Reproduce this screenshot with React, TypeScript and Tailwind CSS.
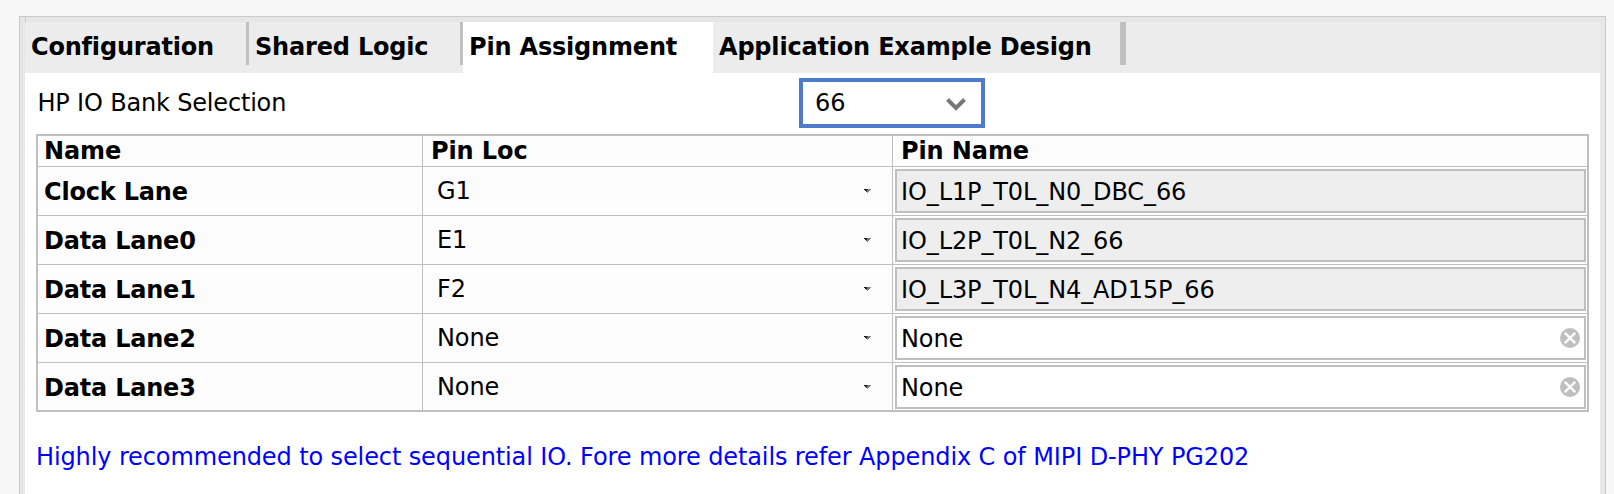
import React from "react";

type Row = { name: string; loc: string; pin: string; editable?: boolean };

const rows: Row[] = [
  { name: "Clock Lane", loc: "G1", pin: "IO_L1P_T0L_N0_DBC_66" },
  { name: "Data Lane0", loc: "E1", pin: "IO_L2P_T0L_N2_66" },
  { name: "Data Lane1", loc: "F2", pin: "IO_L3P_T0L_N4_AD15P_66" },
  { name: "Data Lane2", loc: "None", pin: "None", editable: true },
  { name: "Data Lane3", loc: "None", pin: "None", editable: true },
];

function SmallArrow() {
  return (
    <svg width="7" height="4" viewBox="0 0 7 4" shapeRendering="crispEdges">
      <path d="M0 0h2v1H0z" fill="#111" />
      <path d="M2 0h2v1H2z" fill="#444" />
      <path d="M4 0h3v1H4z" fill="#888" />
      <path d="M1 1h2v1H1z" fill="#222" />
      <path d="M3 1h3v1H3z" fill="#777" />
      <path d="M2 2h1v1H2z" fill="#444" />
      <path d="M3 2h2v1H3z" fill="#888" />
      <path d="M3 3h1v1H3z" fill="#999" />
    </svg>
  );
}

function ClearIcon() {
  return (
    <svg width="20" height="20" viewBox="0 0 20 20">
      <circle cx="10" cy="10" r="10" fill="#bfbfbf" />
      <path d="M4.8 4.8L15.2 15.2M15.2 4.8L4.8 15.2" stroke="#fff" strokeWidth="2.4" />
    </svg>
  );
}

export default function App() {
  return (
    <div className="h-[494px] w-[1614px] overflow-hidden bg-[#f7f7f7] pl-[19px] pt-4 font-['DejaVu_Sans',sans-serif] text-[24px] leading-[30px] tracking-[-0.11px] whitespace-nowrap text-black">
      <div className="h-[478px] w-[1587px] border-x border-t border-[#cacaca] bg-[#e6e6e6] px-[5px]">
        <div className="h-[5px]">
          <div className="h-full w-px bg-[#cacaca]" />
        </div>
        <div className="h-[473px] bg-white">
          <div className="flex h-[51px] bg-[#ececec] font-bold tracking-[-0.19px]">
            <div className="flex w-[224px] justify-between">
              <span className="pl-[6px] pt-[10px]">Configuration</span>
              <div className="h-[43px] w-[3px] bg-[#c0c0c0]" />
            </div>
            <div className="flex w-[214px] justify-between">
              <span className="pl-[6px] pt-[10px]">Shared Logic</span>
              <div className="h-[43px] w-[3px] bg-[#c0c0c0]" />
            </div>
            <div className="w-[250px] bg-white pl-[6px] pt-[10px]">Pin Assignment</div>
            <div className="flex w-[413px] justify-between">
              <span className="pl-[6px] pt-[10px]">Application Example Design</span>
              <div className="h-[43px] w-[6px] bg-[#c0c0c0]" />
            </div>
          </div>
          <div className="flex h-[61px] pt-[5px]">
            <div className="w-[774px] pl-[12.5px] pt-[10px] tracking-[-0.18px]">HP IO Bank Selection</div>
            <div className="flex h-[50px] w-[186px] items-start justify-between border-4 border-[#4f7bcf] bg-white pl-[12px] pr-[14px]">
              <span className="pt-[6px]">66</span>
              <svg className="mt-[15px]" width="22" height="14" viewBox="0 0 22 14">
                <path d="M2.5 2.5L11 11L19.5 2.5" fill="none" stroke="#787878" strokeWidth="4" />
              </svg>
            </div>
          </div>
          <div className="ml-[11px] h-[278px] w-[1553px] border-2 border-[#bfbfbf] bg-[#fcfcfc]">
            <div className="flex h-[31px] border-b border-[#bfbfbf] font-bold">
              <div className="w-[385px] border-r border-[#bfbfbf] pl-[6px]">Name</div>
              <div className="w-[470px] border-r border-[#bfbfbf] pl-[8px]">Pin Loc</div>
              <div className="pl-[8px]">Pin Name</div>
            </div>
            {rows.map((r) => (
              <div key={r.name} className="flex h-[49px] border-b border-[#bfbfbf] last:h-[47px] last:border-b-0">
                <div className="w-[385px] border-r border-[#bfbfbf] pl-[6px] pt-[10px] font-bold tracking-[-0.2px]">{r.name}</div>
                <div className="flex w-[470px] items-start justify-between border-r border-[#bfbfbf] pl-[14px] pr-[21px]">
                  <span className="pt-[9px]">{r.loc}</span>
                  <span className="pt-[22px] leading-none">
                    <SmallArrow />
                  </span>
                </div>
                <div className="w-[694px] bg-white pl-[2px] pt-[2px]">
                  <div
                    className={
                      "flex h-[44px] w-[691px] items-center justify-between border-2 border-[#bfbfbf] pl-[4px] pr-[4px] " +
                      (r.editable ? "bg-white" : "bg-[#eeeeee]")
                    }
                  >
                    <span className="pt-[2px]">{r.pin}</span>
                    {r.editable && <ClearIcon />}
                  </div>
                </div>
              </div>
            ))}
          </div>
          <div className="pl-[11px] pt-[30px] text-[#0000ff]">
            Highly recommended to select sequential IO. Fore more details refer Appendix C of MIPI D-PHY PG202
          </div>
        </div>
      </div>
    </div>
  );
}
